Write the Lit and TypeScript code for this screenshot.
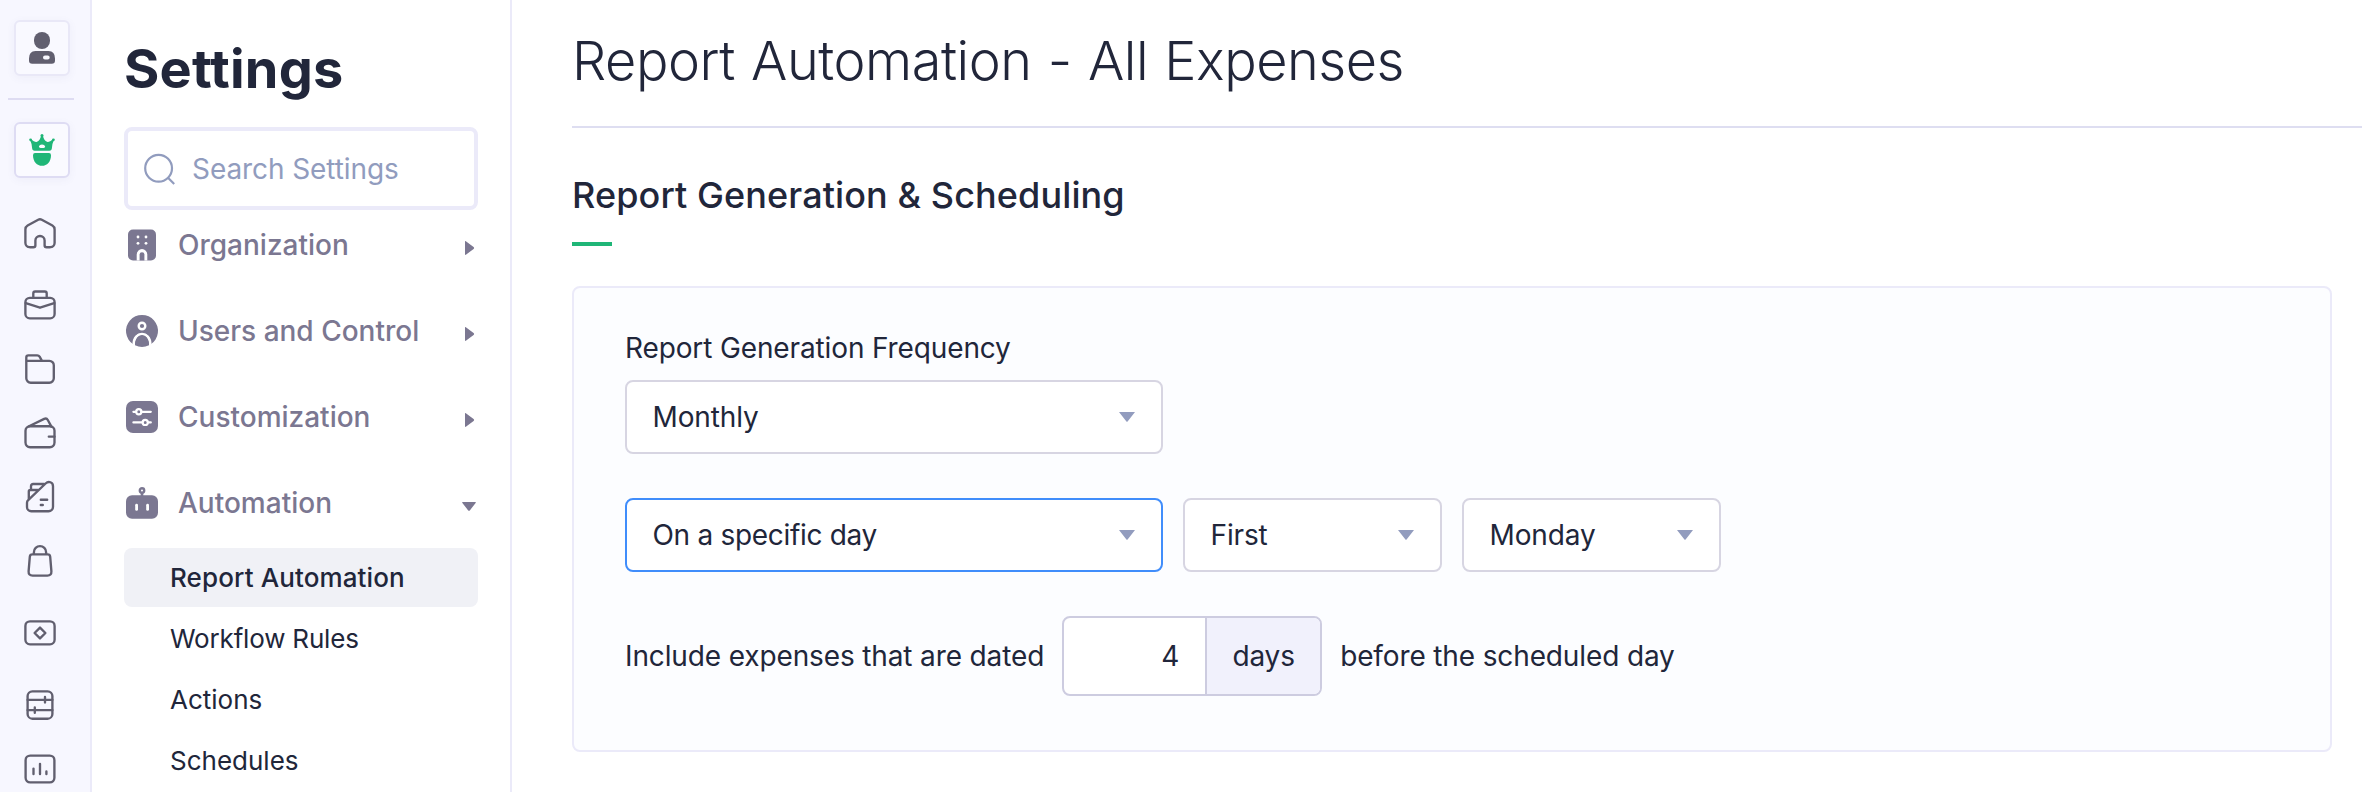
import { LitElement, html, css, svg } from "lit";
import { customElement, property } from "lit/decorators.js";
import { classMap } from "lit/directives/class-map.js";

const railIcons = {
  home: svg`<path d="M6.2 30.2H5.6A4.3 4.3 0 0 1 1.4 26V12.4Q1.4 9.8 3.6 8.5L14.2 2.7Q16 1.7 17.8 2.7L28.4 8.5Q30.6 9.8 30.6 12.4V26A4.3 4.3 0 0 1 26.4 30.2H22.6Q20.6 30.2 20.6 28.2V23.6A4.6 4.6 0 0 0 11.4 23.6V28.2Q11.4 30.2 9.4 30.2Z"/>`,
  trips: svg`<rect x="1.4" y="8.8" width="29.2" height="20.5" rx="4.4"/><path d="M9.3 8.6V4.4Q9.3 2.5 11.2 2.5H20.8Q22.7 2.5 22.7 4.4V8.6M1.8 14.2L16 18.7L30.2 14.2"/>`,
  folder: svg`<path d="M2.3 7.8V4.4Q2.3 2.3 4.4 2.3H13.2Q14.8 2.3 15.6 3.7L18 7.8M2.3 7.8H25.4A4.4 4.4 0 0 1 29.8 12.2V25.3A4.4 4.4 0 0 1 25.4 29.7H6.7A4.4 4.4 0 0 1 2.3 25.3Z"/>`,
  wallet: svg`<rect x="1.5" y="9.2" width="29" height="21" rx="4.6"/><path d="M24.8 19.6H30.5M5 9.2L20.2 1.9Q22.6 .9 23.8 3L27.4 9.6"/>`,
  receipt: svg`<path d="M3 21.8Q3 20.2 4.2 19.1L21.6 2.5C24.6 -.4 29 1.2 29 5.2V25.8A4.4 4.4 0 0 1 24.6 30.2H7.2A4.2 4.2 0 0 1 3 26ZM4.8 18.2V10.6Q4.8 9 6.4 9H13.6M7 8.6V5.2Q7 3 9.2 3H20M16.8 18.7H23.2M16.8 24H18.8"/>`,
  bag: svg`<path d="M8.4 9.4H23.6Q26 9.4 26.2 11.8L27.4 26.4Q27.6 30.6 23.4 30.6H8.6Q4.4 30.6 4.6 26.4L5.8 11.8Q6 9.4 8.4 9.4ZM9.9 9V7.2A6.1 6.1 0 0 1 22.1 7.2V9"/>`,
  card: svg`<rect x="1.4" y="4.3" width="29.2" height="23" rx="4.6"/><path d="M16 10.6L21.4 16L16 21.4L10.6 16Z"/>`,
  sheet: svg`<rect x="3.6" y="2.3" width="24.8" height="27.4" rx="4.8"/><path d="M3.6 10.8H28.4M3.6 21.1H28.4M21 8V13.4M10.8 18.4V23.8"/>`,
  chart: svg`<rect x="1.6" y="2.6" width="28.8" height="26.8" rx="4.6"/><path d="M9.5 15.6V21M16 10.8V21M22.4 18.4V21"/>`,
};
type RailName = keyof typeof railIcons;

const navIcons = {
  organization: svg`<rect x="2" y=".5" width="28" height="31" rx="5" fill="currentColor"/><path d="M10.7 31.5V25.4A5.3 5.3 0 0 1 21.3 25.4V31.5Z" fill="#fff"/><path d="M13.6 31.5V25.6A2.4 2.4 0 0 1 18.4 25.6V31.5Z" fill="currentColor"/><g fill="#fff"><circle cx="12" cy="8" r="1.4"/><circle cx="20" cy="8" r="1.4"/><circle cx="12" cy="14.3" r="1.4"/><circle cx="20" cy="14.3" r="1.4"/></g>`,
  users: svg`<path d="M7.2 29.3A16 16 0 1 1 24.8 29.3C24.8 14.5 7.2 14.5 7.2 29.3Z" fill="currentColor"/><path d="M9 30.2C8 16.4 24 16.4 23 30.2Q16 33.6 9 30.2Z" fill="currentColor"/><path d="M7.6 29.6C7.4 15.4 24.6 15.4 24.4 29.6" fill="none" stroke="#fff" stroke-width="2.3"/><circle cx="16" cy="11" r="3.3" fill="none" stroke="#fff" stroke-width="2.4"/>`,
  customization: svg`<rect width="32" height="32" rx="7" fill="currentColor"/><path d="M7.4 10.8H10M15.4 10.8H24.8M7.4 21.4H16.4M22 21.4H24.8" stroke="#fff" stroke-width="2.2" stroke-linecap="round"/><circle cx="12.8" cy="10.8" r="2.6" fill="none" stroke="#fff" stroke-width="2.2"/><circle cx="19.2" cy="21.4" r="2.6" fill="none" stroke="#fff" stroke-width="2.2"/>`,
  automation: svg`<rect y="8.2" width="32" height="23.6" rx="6" fill="currentColor"/><path d="M16 5V9" stroke="currentColor" stroke-width="2.6"/><circle cx="16" cy="3.4" r="2.2" fill="none" stroke="currentColor" stroke-width="2.4"/><rect x="9.2" y="16.8" width="2.8" height="7" rx="1.4" fill="#fff"/><rect x="20.2" y="16.8" width="2.8" height="7" rx="1.4" fill="#fff"/>`,
};
type NavName = keyof typeof navIcons;

@customElement("app-rail")
export class AppRail extends LitElement {
  static styles = css`
    :host { display: flex; flex-direction: column; box-sizing: border-box; width: 92px; height: 792px; flex: none; overflow: hidden; background: #f7f7ff; border-right: 2px solid #ebeaf9; padding-top: 20px; color: #615f6f; }
    .tile { box-sizing: border-box; width: 56px; height: 56px; margin-left: 14px; border: 2px solid #e9e8f7; border-radius: 6px; background: #f9f9ff; display: grid; place-items: center; box-shadow: 0 2px 8px rgba(90, 90, 160, 0.06); flex: none; }
    .app { border-color: #dedcf3; background: #fafaff; color: #1fb677; }
    .rule { height: 2px; width: 66px; margin: 22px 0 22px 8px; background: #dedcf2; flex: none; }
    .list { display: flex; flex-direction: column; gap: 32px; padding: 39px 0 0 24px; }
    .icon { display: block; width: 32px; height: 32px; overflow: visible; }
    .line { fill: none; stroke: currentColor; stroke-width: 2.35; stroke-linecap: round; stroke-linejoin: round; }
    .spaced { margin-top: 8px; }
  `;
  private items: Array<[RailName, boolean]> = [
    ["home", false], ["trips", true], ["folder", false], ["wallet", false], ["receipt", false],
    ["bag", false], ["card", true], ["sheet", true], ["chart", false],
  ];
  render() {
    return html`
      <div class="tile"><svg class="icon" viewBox="0 0 32 32" fill="currentColor"><rect x="8" y="0" width="16" height="17" rx="8"/><path fill-rule="evenodd" d="M9.5 19H22.5Q29 19 29 26.6V28.6Q29 31.8 25.8 31.8H6.2Q3 31.8 3 28.6V26.6Q3 19 9.5 19ZM19 23.4A2 2 0 0 0 19 27.4H21.7A2 2 0 0 0 21.7 23.4Z"/></svg></div>
      <div class="rule"></div>
      <div class="tile app"><svg class="icon" viewBox="0 0 32 32" fill="currentColor"><circle cx="4.6" cy="5.8" r="1.4"/><circle cx="16" cy="1.5" r="1.5"/><circle cx="27.4" cy="5.8" r="1.4"/><path fill-rule="evenodd" d="M4.2 6.2L5.4 5.6Q8.6 8.6 11 7.8Q14 6.6 15.1 1.8H16.9Q18 6.6 21 7.8Q23.4 8.6 26.6 5.6L27.8 6.2Q26 10 25.9 14Q25.7 16.8 23.4 16.8H8.6Q6.3 16.8 6.1 14Q6 10 4.2 6.2ZM14.6 13.9H17.6Q19.2 13.9 19.2 12.5Q18.6 10.6 16 10.6Q13.4 10.6 12.9 12.5Q12.9 13.9 14.6 13.9Z"/><path d="M9 19.1H23Q25 19.1 25 21.2C25 27.6 21 31.8 16 31.8S7 27.6 7 21.2Q7 19.1 9 19.1Z"/></svg></div>
      <div class="list">
        ${this.items.map(([name, spaced]) => html`<svg class=${classMap({ icon: true, line: true, spaced })} viewBox="0 0 32 32">${railIcons[name]}</svg>`)}
      </div>`;
  }
}

@customElement("settings-nav")
export class SettingsNav extends LitElement {
  static styles = css`
    :host { display: flex; flex-direction: column; box-sizing: border-box; width: 420px; height: 792px; flex: none; overflow: hidden; border-right: 2px solid #ebeaf9; padding: 37px 32px 0; background: #fff; color: #21263a; }
    .title { margin: 0; font-size: 54px; line-height: 64px; font-weight: 700; white-space: nowrap; letter-spacing: 0.2px; }
    .search { box-sizing: border-box; height: 83px; margin-top: 26px; border: 4px solid #ebeaf9; border-radius: 8px; display: flex; align-items: center; padding: 0 0 0 16px; gap: 17px; color: #919cbe; font-size: 28px; line-height: 34px; letter-spacing: -0.08px; flex: none; }
    .lens { width: 31px; height: 32px; flex: none; }
    .groups { display: flex; flex-direction: column; gap: 54px; padding: 19px 2px 29px; }
    .group { display: flex; align-items: center; height: 32px; color: #7b7791; font-size: 28px; font-weight: 500; line-height: 32px; }
    .icon { width: 32px; height: 32px; margin-right: 20px; flex: none; overflow: visible; }
    .name { flex: 1; white-space: nowrap; }
    .caret { width: 14px; height: 14px; margin-top: 6px; flex: none; }
    .sub { display: flex; flex-direction: column; gap: 2px; }
    .item { height: 59px; line-height: 59px; padding-left: 46px; font-size: 26px; border-radius: 8px; color: #21263a; white-space: nowrap; flex: none; }
    .active { background: #f0f1f6; font-weight: 500; letter-spacing: 0.12px; }
    .tight { letter-spacing: -0.18px; }
  `;
  private groups: Array<[NavName, string, boolean]> = [
    ["organization", "Organization", false], ["users", "Users and Control", false],
    ["customization", "Customization", false], ["automation", "Automation", true],
  ];
  private subs = ["Report Automation", "Workflow Rules", "Actions", "Schedules"];
  render() {
    return html`
      <h1 class="title">Settings</h1>
      <div class="search"><svg class="lens" viewBox="0 0 31 32" fill="none" stroke="currentColor" stroke-width="2.2"><circle cx="14.6" cy="15.2" r="13.4"/><path d="M24 24.8L30.2 31"/></svg><span>Search Settings</span></div>
      <div class="groups">
        ${this.groups.map(([icon, name, open]) => html`<div class="group">
          <svg class="icon" viewBox="0 0 32 32">${navIcons[icon]}</svg><span class="name">${name}</span>
          <svg class="caret" viewBox="0 0 14 14" fill="currentColor"><path d=${open ? "M.8 3H13.2Q14.4 3 13.6 4L8 11.2Q7 12.2 6 11.2L.4 4Q-.4 3 .8 3Z" : "M3 .8Q3 -.6 4.2 .4L11.6 6Q12.6 7 11.6 8L4.2 13.6Q3 14.4 3 13.2Z"}/></svg>
        </div>`)}
      </div>
      <div class="sub">${this.subs.map((s, i) => html`<div class=${classMap({ item: true, active: i === 0, tight: i === 1 })}>${s}</div>`)}</div>`;
  }
}

@customElement("select-box")
export class SelectBox extends LitElement {
  @property() value = "";
  static styles = css`
    :host { box-sizing: border-box; display: flex; align-items: center; justify-content: space-between; height: 74px; width: 259px; border: 2px solid #d7d5e2; border-radius: 8px; background: #fff; padding: 0 26px 0 25.5px; font-size: 28px; line-height: 34px; }
    :host(.wide) { width: 538px; }
    :host(.focused) { border-color: #408dfb; letter-spacing: -0.3px; }
    .arrow { width: 16px; height: 10px; color: #929cbe; }
  `;
  render() {
    return html`<span>${this.value}</span><svg class="arrow" viewBox="0 0 16 10" fill="currentColor"><path d="M0 0H16L8.6 9.4Q8 10.2 7.4 9.4Z"/></svg>`;
  }
}

@customElement("app-root")
export class AppRoot extends LitElement {
  static styles = css`
    :host { display: flex; width: 100%; height: 792px; overflow: hidden; background: #fff; font-family: Inter, "Liberation Sans", sans-serif; color: #21263a; }
    .main { flex: 1; min-width: 0; padding-left: 60px; }
    .title { margin: 0; height: 126px; font-size: 54px; line-height: 121px; font-weight: 300; letter-spacing: -0.47px; word-spacing: 1.5px; border-bottom: 2px solid #dedef1; white-space: nowrap; }
    .heading { margin: 45px 0 0; font-size: 36px; line-height: 44px; font-weight: 500; letter-spacing: 0.1px; }
    .accent { width: 40px; height: 4px; margin-top: 25px; background: #1fb677; }
    .panel { box-sizing: border-box; height: 466px; margin: 40px 30px 0 0; border: 2px solid #ebeaf9; border-radius: 8px; background: #fcfdff; padding: 43px 51px; font-size: 28px; line-height: 34px; letter-spacing: -0.13px; }
    .label { margin-bottom: 15px; }
    .row { display: flex; gap: 20px; margin-top: 44px; }
    .sentence { display: flex; align-items: center; margin-top: 44px; gap: 18px; white-space: nowrap; }
    .amount { box-sizing: border-box; display: flex; width: 260px; height: 80px; border: 2px solid #cdcce0; border-radius: 8px; overflow: hidden; background: #fff; line-height: 76px; }
    .number { width: 115px; text-align: right; padding-right: 26px; border-right: 2px solid #cdcce0; }
    .unit { flex: 1; text-align: center; background: #f1f1fc; }
  `;
  render() {
    return html`
      <app-rail></app-rail>
      <settings-nav></settings-nav>
      <main class="main">
        <h2 class="title">Report Automation - All Expenses</h2>
        <h3 class="heading">Report Generation &amp; Scheduling</h3>
        <div class="accent"></div>
        <section class="panel">
          <div class="label">Report Generation Frequency</div>
          <select-box class="wide" value="Monthly"></select-box>
          <div class="row">
            <select-box class="wide focused" value="On a specific day"></select-box>
            <select-box value="First"></select-box>
            <select-box value="Monday"></select-box>
          </div>
          <div class="sentence">
            <span>Include expenses that are dated</span>
            <div class="amount"><div class="number">4</div><div class="unit">days</div></div>
            <span>before the scheduled day</span>
          </div>
        </section>
      </main>`;
  }
}
